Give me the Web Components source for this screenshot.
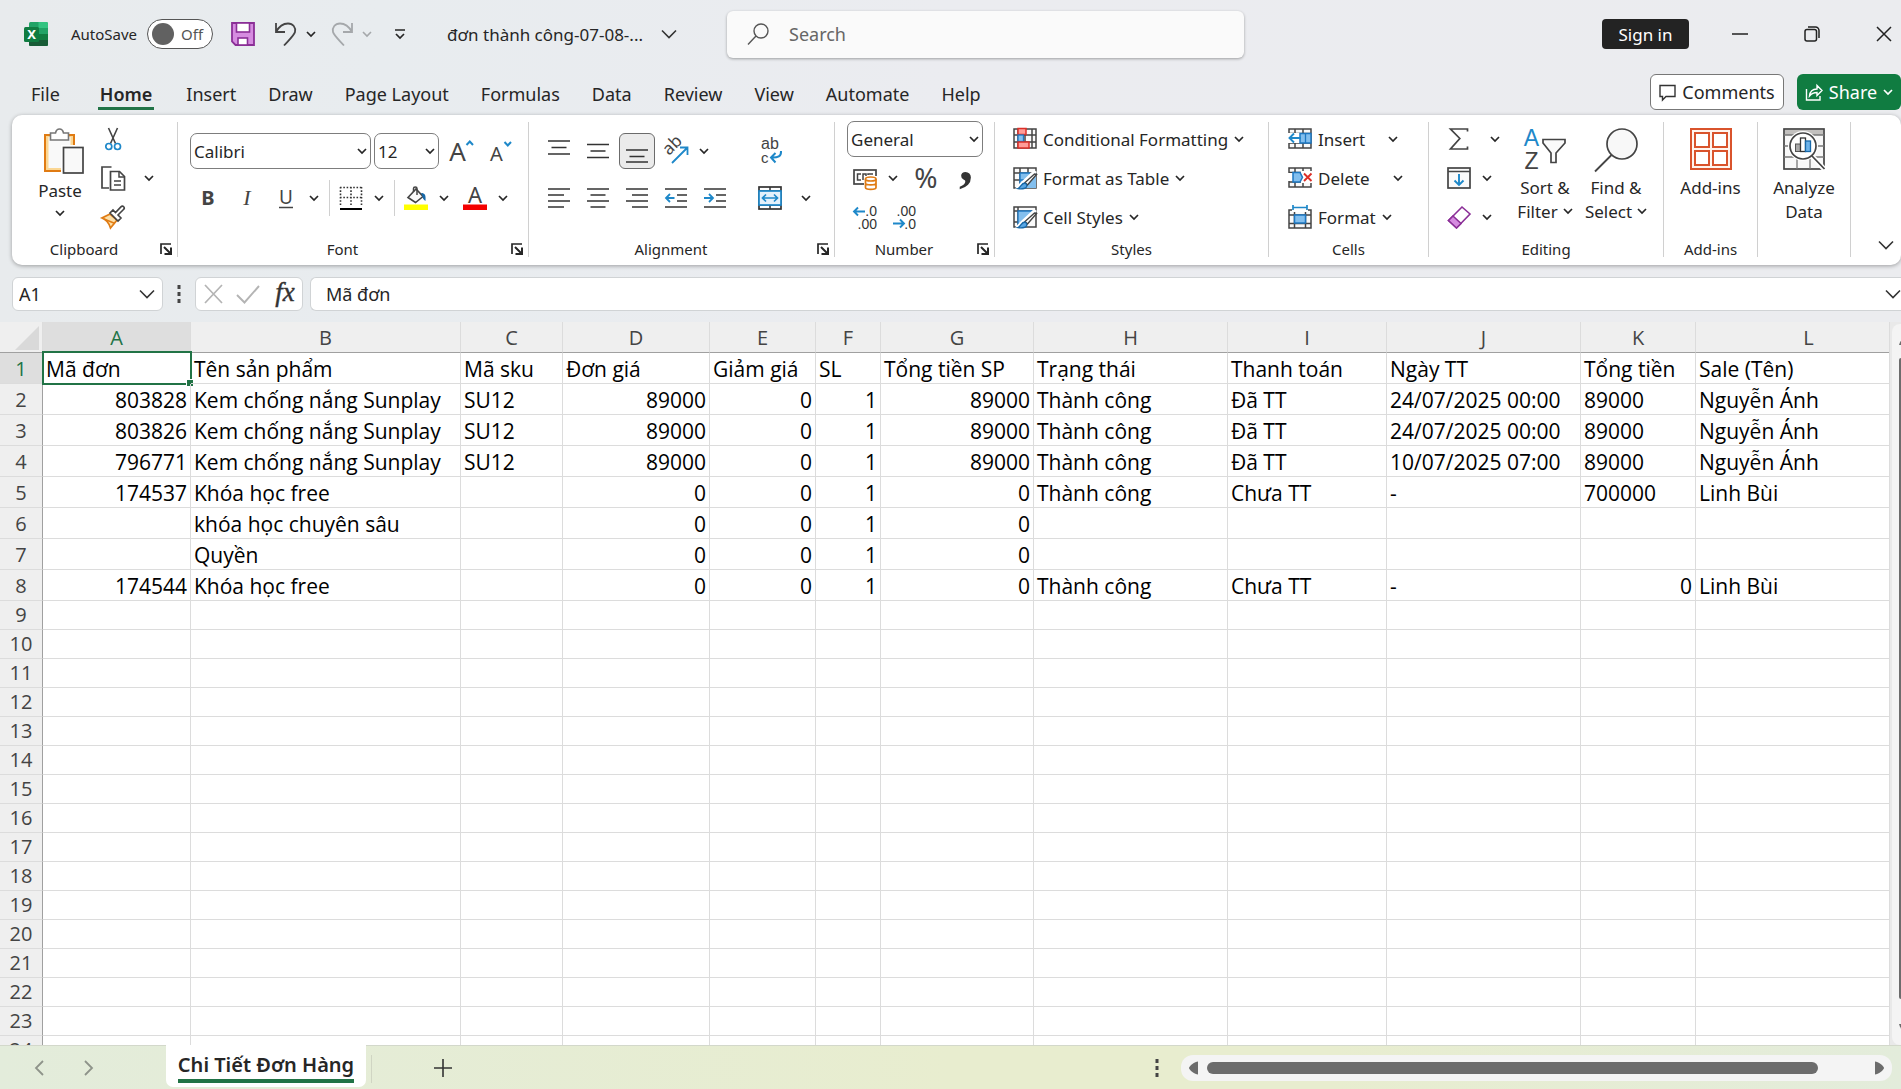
<!DOCTYPE html>
<html lang="vi">
<head>
<meta charset="utf-8">
<title>đơn thành công-07-08 - Excel</title>
<style>
html,body{margin:0;height:100%;overflow:hidden}
body{font-family:"Noto Sans","Open Sans",sans-serif;color:#262626;font-size:17px}
</style>
</head>
<body>
<excel-app></excel-app>
<script>
const ICONS = {
  chev: [10,10,'<path d="M1 3l4 4 4-4" fill="none" stroke="#262626" stroke-width="1.7"/>'],
  chevGrey: [10,10,'<path d="M1 3l4 4 4-4" fill="none" stroke="#a5a8ab" stroke-width="1.6"/>'],
  chevWhite: [10,10,'<path d="M1 3l4 4 4-4" fill="none" stroke="#fff" stroke-width="1.7"/>'],
  chevBig: [16,16,'<path d="M1 4.500l7 7 7-7" fill="none" stroke="#333" stroke-width="1.6"/>'],
  chevLeft: [16,16,'<path d="M11 1L4 8l7 7" fill="none" stroke="#8e938a" stroke-width="1.8"/>'],
  chevRight: [16,16,'<path d="M5 1l7 7-7 7" fill="none" stroke="#8e938a" stroke-width="1.8"/>'],
  excel: [24,24,'<rect x="5" width="19" height="24" rx="1.500" fill="#21a366"/><path d="M14.500 0H22.500a1.500 1.500 0 0 1 1.500 1.500V6h-9.500z" fill="#33c481"/><path d="M5 6h9.500v6H5z" fill="#107c41"/><path d="M14.500 12H24v6h-9.500z" fill="#107c41"/><path d="M5 12h9.500v6H5z" fill="#185c37"/><path d="M5 18h19v4.500a1.500 1.500 0 0 1-1.500 1.500h-16A1.500 1.500 0 0 1 5 22.500z" fill="#185c37"/><rect y="5" width="15" height="15" rx="1.500" fill="#107c41"/><text x="7.500" y="17" font-size="13" font-weight="700" text-anchor="middle" fill="#fff">X</text>'],
  save: [24,24,'<path d="M1 1h22v22H4.500L1 19.500z" fill="#d68ce0" stroke="#8b2f97" stroke-width="1.800"/><rect x="5.500" y="1" width="13" height="9" fill="#fff" stroke="#8b2f97" stroke-width="1.600"/><rect x="7" y="16" width="9.500" height="7" fill="#fff" stroke="#8b2f97" stroke-width="1.600"/>'],
  undo: [24,24,'<path d="M2 1v9h9M2 10C5 4.500 9 1.500 14 1.500c5 0 8 4 7 8.500-.6 3-6 8-11 13.500" fill="none" stroke="#444" stroke-width="1.800"/>'],
  redo: [24,24,'<path d="M22 1v9h-9M22 10C19 4.500 15 1.500 10 1.500c-5 0-8 4-7 8.500.6 3 6 8 11 13.500" fill="none" stroke="#a5a8ab" stroke-width="1.800"/>'],
  qat: [12,12,'<path d="M1 2h10M2 6l4 4 4-4" fill="none" stroke="#262626" stroke-width="1.700"/>'],
  search: [22,22,'<circle cx="14" cy="8" r="7" fill="none" stroke="#555" stroke-width="1.400"/><path d="M9 13L1 21.500" stroke="#555" stroke-width="1.400"/>'],
  min: [16,16,'<path d="M0 8h16" stroke="#222" stroke-width="1.500"/>'],
  restore: [16,16,'<rect x="1" y="3.500" width="11.500" height="11.500" rx="2" fill="none" stroke="#222" stroke-width="1.500"/><path d="M4 1h7.500A3.500 3.500 0 0 1 15 4.500V12" fill="none" stroke="#222" stroke-width="1.500"/>'],
  close: [16,16,'<path d="M1 1l14 14M15 1L1 15" stroke="#222" stroke-width="1.500"/>'],
  comment: [17,17,'<path d="M1 1.500h15v11H7l-3.500 3.500v-3.500H1z" fill="none" stroke="#333" stroke-width="1.400"/>'],
  share: [18,18,'<path d="M1.500 6v11h13.500v-4M4.500 13c.5-4.500 3-7 7.500-7V2.500l5 5-5 5V9.500c-3.500 0-5.500 1-7.500 3.500z" fill="none" stroke="#fff" stroke-width="1.400"/>'],
  paste: [42,46,'<path d="M3 7h29v36H3z" fill="#fbd794" stroke="#e07b13" stroke-width="2"/><path d="M6.500 9h22v31h-22z" fill="#f9f9f9"/><path d="M8.500 12V5h5c.5-2.500 2-4 4-4s3.500 1.500 4 4h5v7z" fill="#fff" stroke="#777" stroke-width="1.600"/><rect x="19" y="17" width="23" height="29" fill="#fff"/><rect x="21.500" y="19.500" width="19.500" height="25.500" fill="#f9f9f9" stroke="#444" stroke-width="1.700"/>'],
  cut: [24,24,'<path d="M7.500 1l7 15.500M16.500 1l-7 15.500" stroke="#444" stroke-width="1.600"/><circle cx="7.800" cy="19.500" r="3" fill="none" stroke="#1e88c9" stroke-width="1.700"/><circle cx="16.500" cy="19.500" r="3" fill="none" stroke="#1e88c9" stroke-width="1.700"/>'],
  copy: [24,24,'<path d="M8 22H1V1h9.500" fill="none" stroke="#444" stroke-width="1.700"/><path d="M9.500 5.500h9l5 5V24h-14z" fill="#fff" stroke="#444" stroke-width="1.700"/><path d="M18 5.500V11h5.500M13 15h7M13 19h7" fill="none" stroke="#444" stroke-width="1.500"/>'],
  brush: [24,24,'<path d="M9 9L1 13c4 1.500 7 5 8.500 10L16 15z" fill="#fde0a8" stroke="#e07b13" stroke-width="1.700"/><path d="M3 14l11 4.500" stroke="#e07b13" stroke-width="1.400"/><path d="M9 8l8 8 3-3-3-3 5.500-5.500c1-1 1-2 .2-2.800-.8-.8-1.800-.8-2.800.2L14.500 7.500 12 5z" fill="#fff" stroke="#444" stroke-width="1.600"/>'],
  launch: [12,12,'<path d="M1 11V1h10" fill="none" stroke="#262626" stroke-width="1.700"/><path d="M4 4l6 6M11 4.500V11H4.500" fill="none" stroke="#262626" stroke-width="2"/>'],
  bigA: [24,24,'<text x="9.500" y="22" font-size="26" text-anchor="middle" fill="#444">A</text><path d="M18.500 6l3.300-3.500L25 6" fill="none" stroke="#1e88c9" stroke-width="2"/>'],
  smallA: [24,24,'<text x="9.500" y="22" font-size="20" text-anchor="middle" fill="#444">A</text><path d="M17.500 3l3.300 3.500L24 3" fill="none" stroke="#1e88c9" stroke-width="2"/>'],
  bold: [24,24,'<text x="12" y="19" font-size="20" font-weight="700" text-anchor="middle" fill="#444">B</text>'],
  italic: [24,24,'<text x="12" y="19" font-size="22" font-style="italic" font-family="Liberation Serif" text-anchor="middle" fill="#444">I</text>'],
  underline: [24,24,'<text x="12" y="18" font-size="19" text-anchor="middle" fill="#444">U</text><path d="M5 21.500h14" stroke="#444" stroke-width="1.500"/>'],
  borders: [24,24,'<path d="M1.500 1v19M22.500 1v19M12 1v19M1 1.500h22M1 11.500h22" stroke="#333" stroke-width="1.600" stroke-dasharray="1.600 1.700"/><path d="M1 23h22" stroke="#000" stroke-width="2"/>'],
  fill: [24,24,'<path d="M4 11.500L12 3l7 7.500-7.500 6z" fill="#fafafa" stroke="#444" stroke-width="1.600"/><path d="M9.500 6V2.500c0-2 3.500-2 3.500 0V9" fill="none" stroke="#444" stroke-width="1.500"/><path d="M17 7c4 0 5 2 4.500 8-2-1-3-3-3.500-6" fill="#1768a8"/><path d="M0 18.500h24V24H0z" fill="#ff0"/>'],
  fontcolor: [24,24,'<text x="12" y="16.500" font-size="22" text-anchor="middle" fill="#444">A</text><path d="M0 18.500h24V24H0z" fill="#f40000"/>'],
  top: [24,24,'<path d="M1 2h22M4.500 8.500h15M1 15h22" stroke="#333" stroke-width="1.700"/>'],
  middle: [24,24,'<path d="M1 5.500h22M4.500 12h15M1 18.500h22" stroke="#333" stroke-width="1.700"/>'],
  bottom: [24,24,'<path d="M1 11h22M4.500 17.500h15M1 23h22" stroke="#333" stroke-width="1.700"/>'],
  orient: [26,26,'<text x="0" y="0" font-size="17" fill="#444" transform="translate(6 18) rotate(-45)">ab</text><path d="M9 25L24 10M17 9.500h7.500V17" fill="none" stroke="#1e88c9" stroke-width="1.800"/>'],
  left: [24,24,'<path d="M1 3h22M1 9h16M1 15h22M1 21h16" stroke="#333" stroke-width="1.700"/>'],
  center: [24,24,'<path d="M1 3h22M4.500 9h15M1 15h22M4.500 21h15" stroke="#333" stroke-width="1.700"/>'],
  right: [24,24,'<path d="M1 3h22M7 9h16M1 15h22M7 21h16" stroke="#333" stroke-width="1.700"/>'],
  outdent: [24,24,'<path d="M1 3h22M13 9h10M13 15h10M1 21h22" stroke="#333" stroke-width="1.700"/><path d="M10.500 12H2M6 8l-4 4 4 4" fill="none" stroke="#1e88c9" stroke-width="1.800"/>'],
  indent: [24,24,'<path d="M1 3h22M13 9h10M13 15h10M1 21h22" stroke="#333" stroke-width="1.700"/><path d="M1 12h8.500M6 8l4 4-4 4" fill="none" stroke="#1e88c9" stroke-width="1.800"/>'],
  wrap: [24,24,'<text x="3" y="10" font-size="16" font-family="Liberation Sans" fill="#444">ab</text><text x="3" y="24" font-size="15" font-family="Liberation Sans" fill="#444">c</text><path d="M23 12c.5 5-3 7-10 6.500M17.500 14L13 18.500l4.500 5" fill="none" stroke="#1e88c9" stroke-width="2"/>'],
  merge: [24,24,'<rect x="1" y="1" width="22" height="22" fill="#fff" stroke="#333" stroke-width="1.700"/><path d="M12 1v22M1 5h22M1 19h22" stroke="#333" stroke-width="1.500"/><rect x="1" y="5" width="22" height="14" fill="#e4f1fb" stroke="#1e88c9" stroke-width="1.700"/><path d="M4.500 12h15M8 8.500L4.500 12 8 15.500M16 8.500l3.500 3.500-3.500 3.500" fill="none" stroke="#1e88c9" stroke-width="1.700"/>'],
  currency: [24,24,'<rect x="1" y="4" width="22" height="14" fill="#fff" stroke="#444" stroke-width="1.700"/><path d="M8 8H4.500v6H8M10 14V8h3v3M15 9V8h5" fill="none" stroke="#444" stroke-width="1.500"/><path d="M11 10h13v14H11z" fill="#fff"/><path d="M12.500 13v8.500c0 2.500 10.500 2.500 10.500 0V13M12.500 17c0 2.500 10.500 2.500 10.500 0" fill="none" stroke="#e07b13" stroke-width="1.700"/><ellipse cx="17.750" cy="13" rx="5.250" ry="2" fill="#fff" stroke="#e07b13" stroke-width="1.700"/>'],
  percent: [26,26,'<text x="15" y="23" font-size="28" text-anchor="middle" fill="#444">%</text>'],
  comma: [24,24,'<text x="15" y="14" font-size="56" font-weight="700" font-family="Liberation Serif" text-anchor="middle" fill="#333">,</text>'],
  incdec: [24,24,'<text x="24" y="11" font-size="14" font-family="Liberation Sans" text-anchor="end" fill="#333">.0</text><text x="24" y="24" font-size="14" font-family="Liberation Sans" text-anchor="end" fill="#333">.00</text><path d="M12 6.500H1M5 2.500l-4 4 4 4" fill="none" stroke="#1e88c9" stroke-width="1.900"/>'],
  decdec: [24,24,'<text x="24" y="11" font-size="14" font-family="Liberation Sans" text-anchor="end" fill="#333">.00</text><text x="24" y="24" font-size="14" font-family="Liberation Sans" text-anchor="end" fill="#333">.0</text><path d="M1 18.500h11M8 14.500l4 4-4 4" fill="none" stroke="#1e88c9" stroke-width="1.900"/>'],
  cond: [24,24,'<path d="M1 2h22v19H1zM1 8h22M1 15h22M5 2v19M19 2v19M12 2v19" fill="#fafafa" stroke="#444" stroke-width="1.500"/><rect x="5" y="1.500" width="8" height="6" fill="#ff9c97" stroke="#dc2f28" stroke-width="1.500"/><rect x="5" y="8" width="5.500" height="6.500" fill="#83bfee" stroke="#1e78c2" stroke-width="1.300"/><rect x="5" y="15" width="11" height="6" fill="#ff9c97" stroke="#dc2f28" stroke-width="1.500"/>'],
  fmtTable: [24,24,'<path d="M1 2h22v20H1zM1 7h22M1 14h10M7 2v20M15 2v8" fill="#fafafa" stroke="#444" stroke-width="1.500"/><path d="M7 7h16v15H7z" fill="#83bfee"/><path d="M7 7h10M7 7v15M7 14h6" stroke="#1e78c2" stroke-width="1.400"/><path d="M24 6L12 18l-4 5-6-.5L7 17l14-13z" fill="#fff"/><path d="M23.500 8.500L14.500 19 12 16.500l9.500-8.500z" fill="#fff" stroke="#444" stroke-width="1.400"/><path d="M12 17c3 2 2 5-1 5.500-2 .4-4 .4-6 0 3-1 3-5.500 7-5.500z" fill="#5aa7e4" stroke="#1768a8" stroke-width="1.300"/>'],
  cellStyles: [24,24,'<path d="M1 2h22v20H1zM1 6h22M5 2v20M1 17h6" fill="#fafafa" stroke="#444" stroke-width="1.500"/><path d="M5 6h17v3L10 19H5z" fill="#83bfee" stroke="#1e78c2" stroke-width="1.300"/><path d="M24 6L12 18l-4 5-6-.5L7 17l14-13z" fill="#fff"/><path d="M23.500 8.500L14.500 19 12 16.500l9.500-8.500z" fill="#fff" stroke="#444" stroke-width="1.400"/><path d="M12 17c3 2 2 5-1 5.500-2 .4-4 .4-6 0 3-1 3-5.500 7-5.500z" fill="#5aa7e4" stroke="#1768a8" stroke-width="1.300"/>'],
  insCell: [24,24,'<path d="M1 2h22v19H1zM1 6.500h22M1 16h22M7 2v19M15 2v19" fill="#fafafa" stroke="#444" stroke-width="1.500"/><path d="M0 6h14v10H0z" fill="#fff"/><rect x="12" y="6.500" width="11" height="9.500" fill="#83bfee" stroke="#1e78c2" stroke-width="1.500"/><path d="M17.500 6.500V16" stroke="#1e78c2" stroke-width="1.300"/><path d="M13 11H1.500M6 6.500L1.500 11 6 15.500" fill="none" stroke="#1e88c9" stroke-width="1.900"/>'],
  delCell: [24,24,'<path d="M1 2h22v19H1zM1 6.500h22M1 16h22M7 2v19M15 2v19" fill="#fafafa" stroke="#444" stroke-width="1.500"/><path d="M0 7h5v8H0zM13 5h11v12H13z" fill="#fff"/><path d="M5 6.500h7l2.500 4.800L12 16H5z" fill="#83bfee" stroke="#1e78c2" stroke-width="1.500"/><path d="M16 7.500l7.500 7.500M23.500 7.500L16 15" stroke="#dc2f28" stroke-width="1.900"/>'],
  fmtCell: [24,24,'<path d="M1 5h22v18H1zM1 10h22M1 18.500h22M6.500 5v18M17.500 5v18" fill="#fafafa" stroke="#444" stroke-width="1.500"/><path d="M4 0h16v7H4z" fill="#fff"/><rect x="6.500" y="10" width="11" height="8" fill="#83bfee" stroke="#1e78c2" stroke-width="1.500"/><path d="M5 2.500h14M5 0v5M19 0v5" stroke="#1e88c9" stroke-width="1.700"/>'],
  sum: [24,24,'<path d="M20.500 4.500V2H3.500l9.300 9.500L3.500 22h17v-2.500" fill="none" stroke="#444" stroke-width="1.700"/>'],
  filldown: [24,24,'<rect x="1" y="2" width="22" height="20" fill="#fafafa" stroke="#444" stroke-width="1.700"/><path d="M1 5.500h22" stroke="#444" stroke-width="1.500"/><path d="M12 8v11M7.500 14.500L12 19l4.500-4.500" fill="none" stroke="#1e88c9" stroke-width="1.900"/>'],
  eraser: [24,24,'<path d="M1.500 15.500L15 2l8 7L9.500 23z" fill="#fff" stroke="#8b2f97" stroke-width="1.600"/><path d="M1.500 15.500L6 11l8 7.500L9.500 23z" fill="#d68ce0" stroke="#8b2f97" stroke-width="1.600"/>'],
  sort: [42,42,'<text x="7.500" y="18" font-size="23" font-family="Liberation Sans" text-anchor="middle" fill="#1e88c9">A</text><text x="7.500" y="41" font-size="23" font-family="Liberation Sans" text-anchor="middle" fill="#444">Z</text><path d="M19 11.500h22v3.500l-9 10v9.500h-5V25l-8-10z" fill="#fafafa" stroke="#444" stroke-width="1.700"/>'],
  find: [44,44,'<circle cx="28" cy="16" r="15" fill="#f8f8f8" stroke="#444" stroke-width="1.700"/><path d="M17.500 27L1 43.500" stroke="#444" stroke-width="1.800"/>'],
  addins: [42,42,'<rect x="1" y="1" width="40" height="40" fill="#fff4ee" stroke="#d9532c" stroke-width="2"/><g fill="#fff" stroke="#d9532c" stroke-width="2"><rect x="5" y="5" width="14" height="14"/><rect x="23" y="5" width="14" height="14"/><rect x="5" y="23" width="14" height="14"/><rect x="23" y="23" width="14" height="14"/></g>'],
  analyze: [42,42,'<rect x="1" y="1" width="40" height="40" fill="#f8f8f8" stroke="#444" stroke-width="1.700"/><path d="M2 2h38v5H2z" fill="#c2c0be"/><path d="M1 7h40M1 18h40M1 29h40M14 29v12M27 29v12" stroke="#777" stroke-width="1.300"/><circle cx="20" cy="18" r="15" fill="#fff"/><path d="M28 27l14 15" stroke="#fff" stroke-width="5"/><circle cx="20" cy="18" r="13" fill="#fff" stroke="#444" stroke-width="1.700"/><path d="M29 28l12.500 13" stroke="#444" stroke-width="1.800"/><rect x="12.500" y="16" width="5" height="7.500" fill="#aaa" stroke="#555"/><rect x="17.500" y="10" width="5" height="13.500" fill="#fff" stroke="#333" stroke-width="1.300"/><rect x="22.500" y="13" width="5" height="10.500" fill="#6db3ea" stroke="#1768a8" stroke-width="1.300"/>'],
  dots: [4,18,'<path d="M.500 0h3v4h-3zM.500 7h3v4h-3zM.500 14h3v4h-3z" fill="#444"/>'],
  cancel: [20,20,'<path d="M1 1l17 18M18 1L1 19" stroke="#b4b4b4" stroke-width="1.700"/>'],
  accept: [24,20,'<path d="M1 11l7.500 7.500L23 2" fill="none" stroke="#b4b4b4" stroke-width="1.900"/>'],
  fx: [24,26,'<text x="13" y="20" font-size="27" font-style="italic" font-family="Liberation Serif" text-anchor="middle" fill="#333" stroke="#333" stroke-width=".4">fx</text>'],
  plus: [18,18,'<path d="M9 0v18M0 9h18" stroke="#333" stroke-width="1.600"/>'],
  corner: [24,24,'<path d="M24 0v24H0z" fill="#d9d9d9"/>'],
  arrL: [12,14,'<path d="M10 0.500v13C7 13.500 1 9 1 7s6-6.500 9-6.500z" fill="#6c6c6c"/>'],
  arrR: [12,14,'<path d="M2 0.500v13c3 0 9-4.500 9-6.500S5 .5 2 .5z" fill="#6c6c6c"/>'],
  arrU: [14,10,'<path d="M0 9h14C13 5 9 0 7 0S1 5 0 9z" fill="#6c6c6c"/>'],
  arrD: [14,10,'<path d="M0 1h14c-1 4-5 9-7 9S1 5 0 1z" fill="#6c6c6c"/>']
};
const BASE = '*{box-sizing:border-box}button,input,select{font:inherit;color:inherit;border:0;background:none;padding:0;margin:0;outline:0}button{display:flex;align-items:center;justify-content:center;white-space:nowrap}';
function define(name, css, html) {
  customElements.define(name, class extends HTMLElement {
    connectedCallback() {
      if (this.shadowRoot) return;
      this.attachShadow({mode:'open'}).innerHTML = '<style>' + BASE + css + '</style>' + (typeof html === 'function' ? html(this) : html);
    }
  });
}

define('ui-icon', ':host{display:inline-flex;flex:none}svg{display:block;overflow:visible}', el => {
  const [w,h,body] = ICONS[el.getAttribute('name')];
  return `<svg width="${w}" height="${h}" viewBox="0 0 ${w} ${h}" aria-hidden="true">${body}</svg>`;
});

define('tool-button', `:host{display:flex;flex:none;height:36px}
  .main{width:36px;height:36px;border:1px solid transparent;border-radius:6px}
  :host([pressed]) .main{background:#ebebeb;border-color:#6b6b6b}
  .more{width:20px;height:36px}:host([wide]) .more{width:36px}`, el =>
  `<button class="main" aria-label="${el.getAttribute('label')}"><ui-icon name="${el.getAttribute('icon')}"></ui-icon></button>` +
  (el.hasAttribute('more') ? `<button class="more" aria-label="${el.getAttribute('label')} options"><ui-icon name="chev"></ui-icon></button>` : ''));

define('text-button', `:host{display:flex;height:36px;font-size:17px}
  button{height:36px;gap:6px;padding:0 6px}.more{padding:0;width:20px;margin-left:12px}`, el =>
  `<button><ui-icon name="${el.getAttribute('icon')}"></ui-icon><slot></slot>${el.hasAttribute('split') ? '' : '<ui-icon name="chev"></ui-icon>'}</button>` +
  (el.hasAttribute('split') ? `<button class="more" aria-label="More"><ui-icon name="chev"></ui-icon></button>` : ''));

define('large-button', `:host{display:block;flex:none;font-size:17px;line-height:24px}
  button{flex-direction:column;justify-content:flex-start;width:100%;gap:6px;padding-top:6px}
  .ic{height:42px}p{margin:0;text-align:center}p ui-icon{margin-left:5px;vertical-align:2px}`, el =>
  `<button><span class="ic"><ui-icon name="${el.getAttribute('icon')}"></ui-icon></span><p><slot></slot>${el.hasAttribute('more') ? '<ui-icon name="chev"></ui-icon>' : ''}</p></button>`);

define('drop-down', `:host{display:block;position:relative;flex:none;height:36px;font-size:17px}
  select{appearance:none;width:100%;height:36px;border:1px solid #7d7d7d;border-radius:7px;padding:0 22px 0 3px;background:#fff}
  ui-icon{position:absolute;right:4px;top:13px;pointer-events:none}`, el =>
  `<select aria-label="${el.getAttribute('label')}"><option>${el.getAttribute('value')}</option></select><ui-icon name="chev"></ui-icon>`);

define('ribbon-group', `:host{display:flex;flex-direction:column;flex:none;border-right:1px solid #d0d0d0;height:135px}
  .body{display:flex;flex:none;height:117px;padding:0 12px}
  .foot{display:flex;flex:none;align-items:center;height:20px;font-size:15px;line-height:20px}
  .foot span{flex:1;text-align:center}.foot button{width:12px;margin:0 5px 0 4px}`, el =>
  `<div class="body"><slot></slot></div><div class="foot"><span>${el.getAttribute('label')||''}</span>${el.hasAttribute('launch')?'<button aria-label="Dialog launcher"><ui-icon name="launch"></ui-icon></button>':''}</div>`);

define('title-bar', `:host{display:flex;align-items:center;height:56px;padding:0 9px 0 24px;font-size:15px}
  .left{display:flex;align-items:center;width:703px;flex:none}
  label{display:flex;align-items:center;gap:10px;margin-left:23px}
  .tg{position:relative;width:66px;height:30px;border:1px solid #555;border-radius:15px;background:#fff;display:flex;align-items:center;justify-content:flex-end;padding-right:9px;color:#555}
  input[type=checkbox]{appearance:none;position:absolute;left:4px;top:3px;width:22px;height:22px;border-radius:11px;background:#616161}
  .s{margin-left:18px}.u{margin-left:19px}.c{margin-left:8px}.r{margin-left:14px}.q{margin-left:22px}
  .name{margin-left:auto;margin-right:50px;gap:18px;font-size:17px}
  .search{display:flex;align-items:center;gap:20px;flex:0 1 517px;height:47px;background:#fafafa;border-radius:6px;box-shadow:0 1px 3px #0005;padding:0 20px;font-size:18px}
  .search input{flex:1;color:#555}.search input::placeholder{color:#666;opacity:1}
  .win{display:flex;align-items:center;margin-left:auto;gap:56px}
  .sign{background:#232323;color:#fff;border-radius:4px;width:87px;height:30px;font-size:17px;margin-right:-13px}`,
  `<div class="left"><ui-icon name="excel"></ui-icon><label>AutoSave<span class="tg"><input type="checkbox">Off</span></label>
  <button class="s" aria-label="Save"><ui-icon name="save"></ui-icon></button>
  <button class="u" aria-label="Undo"><ui-icon name="undo"></ui-icon></button><button class="c" aria-label="Undo list"><ui-icon name="chev"></ui-icon></button>
  <button class="r" aria-label="Redo"><ui-icon name="redo"></ui-icon></button><button class="c" aria-label="Redo list"><ui-icon name="chevGrey"></ui-icon></button>
  <button class="q" aria-label="Customize toolbar"><ui-icon name="qat"></ui-icon></button>
  <button class="name">đơn thành công-07-08-...<ui-icon name="chevBig"></ui-icon></button></div>
  <div class="search"><ui-icon name="search"></ui-icon><input aria-label="Search" placeholder="Search"></div>
  <div class="win"><button class="sign">Sign in</button><button aria-label="Minimize"><ui-icon name="min"></ui-icon></button><button aria-label="Restore"><ui-icon name="restore"></ui-icon></button><button aria-label="Close"><ui-icon name="close"></ui-icon></button></div>`);

define('ribbon-tab', `:host{display:block}button{flex-direction:column;height:36px;font-size:18px;line-height:24px;border-bottom:3px solid transparent;padding-top:7px}
  :host([active]) button{font-weight:600;border-bottom-color:#217346;padding:7px 2px 0}`, '<button><slot></slot></button>');

define('ribbon-tabs', `:host{display:flex;align-items:center;height:41px;margin-top:12px;padding:0 0 5px 31px;font-size:18px}
  nav{display:flex;gap:32px}nav :nth-child(2){margin-left:6px}
  .r{display:flex;margin-left:auto;gap:13px}.r button{height:36px;gap:6px;border-radius:6px}
  .cm{width:134px;background:#fff;border:1px solid #777}.sh{width:104px;background:#107c41;color:#fff}`,
  `<nav>${['File','Home','Insert','Draw','Page Layout','Formulas','Data','Review','View','Automate','Help'].map(t=>`<ribbon-tab${t==='Home'?' active':''}>${t}</ribbon-tab>`).join('')}</nav>
  <div class="r"><button class="cm"><ui-icon name="comment"></ui-icon>Comments</button><button class="sh"><ui-icon name="share"></ui-icon>Share<ui-icon name="chevWhite"></ui-icon></button></div>`);

define('ribbon-bar', `:host{display:flex;height:150px;margin-left:12px;background:#fff;border-radius:10px;box-shadow:0 1px 4px #0005;padding-top:7px}
  .col{display:flex;flex-direction:column;gap:3px;margin-top:-1px}
  .two{display:flex;flex-direction:column;gap:11px;margin-top:11px}
  .row{display:flex;gap:3px}
  .v{width:1px;background:#d0d0d0;margin-left:2px}.tall{margin:8px 10px 14px 9px}
  .paste{width:72px;flex:none;flex-direction:column;justify-content:flex-start;gap:5px;padding-top:6px;font-size:17px;line-height:24px}
  .paste ui-icon:first-child{margin-left:6px}
  .clip{width:166px}.font{width:351px}.align{width:306px}.num{width:160px}.sty{width:274px}.cells{width:160px}.edit{width:235px}.add{width:94px}.an{width:93px}
  .num drop-down{width:136px}.edit .col{margin-right:-5px}
  .clip .col{margin-left:-1px}
  .cells .col{margin-left:1px}
  .an large-button,.add large-button{margin:0 -12px;flex:1}
  .sortb{width:74px}.findb{width:74px;margin-left:-3px}
  .collapse{margin-left:auto;align-self:flex-end;margin-bottom:12px;width:30px}`,
  `<ribbon-group class="clip" label="Clipboard" launch><button class="paste"><ui-icon name="paste"></ui-icon>Paste<ui-icon name="chev"></ui-icon></button>
    <div class="col"><tool-button icon="cut" label="Cut"></tool-button><tool-button icon="copy" label="Copy" more wide></tool-button><tool-button icon="brush" label="Format Painter"></tool-button></div></ribbon-group>
  <ribbon-group class="font" label="Font" launch><div class="two"><div class="row"><drop-down style="width:181px" label="Font" value="Calibri"></drop-down><drop-down style="width:65px" label="Font size" value="12"></drop-down><tool-button icon="bigA" label="Increase font size"></tool-button><tool-button icon="smallA" label="Decrease font size"></tool-button></div>
    <div class="row"><tool-button icon="bold" label="Bold"></tool-button><tool-button icon="italic" label="Italic"></tool-button><tool-button icon="underline" label="Underline" more></tool-button><span class="v"></span><tool-button icon="borders" label="Borders" more></tool-button><span class="v"></span><tool-button icon="fill" label="Fill color" more></tool-button><tool-button icon="fontcolor" label="Font color" more></tool-button></div></div></ribbon-group>
  <ribbon-group class="align" label="Alignment" launch><div class="two"><div class="row"><tool-button icon="top" label="Top"></tool-button><tool-button icon="middle" label="Middle"></tool-button><tool-button pressed icon="bottom" label="Bottom"></tool-button><tool-button icon="orient" label="Orientation" more></tool-button></div>
    <div class="row"><tool-button icon="left" label="Left"></tool-button><tool-button icon="center" label="Center"></tool-button><tool-button icon="right" label="Right"></tool-button><tool-button icon="outdent" label="Decrease indent"></tool-button><tool-button icon="indent" label="Increase indent"></tool-button></div></div>
    <span class="v tall"></span><div class="two"><tool-button icon="wrap" label="Wrap text"></tool-button><tool-button icon="merge" label="Merge" more wide></tool-button></div></ribbon-group>
  <ribbon-group class="num" label="Number" launch><div class="col"><drop-down label="Number format" value="General"></drop-down><div class="row"><tool-button icon="currency" label="Accounting" more></tool-button><tool-button icon="percent" label="Percent"></tool-button><tool-button icon="comma" label="Comma style"></tool-button></div><div class="row"><tool-button icon="incdec" label="Increase decimal"></tool-button><tool-button icon="decdec" label="Decrease decimal"></tool-button></div></div></ribbon-group>
  <ribbon-group class="sty" label="Styles"><div class="col"><text-button icon="cond">Conditional Formatting</text-button><text-button icon="fmtTable">Format as Table</text-button><text-button icon="cellStyles">Cell Styles</text-button></div></ribbon-group>
  <ribbon-group class="cells" label="Cells"><div class="col"><text-button icon="insCell" split>Insert</text-button><text-button icon="delCell" split>Delete</text-button><text-button icon="fmtCell">Format</text-button></div></ribbon-group>
  <ribbon-group class="edit" label="Editing"><div class="col"><tool-button icon="sum" label="Sum" more wide></tool-button><tool-button icon="filldown" label="Fill" more></tool-button><tool-button icon="eraser" label="Clear" more></tool-button></div>
    <large-button class="sortb" icon="sort" more>Sort &amp;<br>Filter</large-button><large-button class="findb" icon="find" more>Find &amp;<br>Select</large-button></ribbon-group>
  <ribbon-group class="add" label="Add-ins"><large-button icon="addins">Add-ins</large-button></ribbon-group>
  <ribbon-group class="an"><large-button icon="analyze">Analyze<br>Data</large-button></ribbon-group>
  <button class="collapse" aria-label="Collapse ribbon"><ui-icon name="chevBig"></ui-icon></button>`);

define('formula-bar', `:host{display:flex;align-items:center;height:57px;font-size:18px;padding-left:12px}
  div{display:flex;align-items:center;height:34px;background:#fff;border:1px solid #d0d3d5;border-radius:6px}
  .nb{width:151px;padding:0 7px 0 6px}.nb input{flex:1;min-width:0}
  .d{margin:0 14px}.ed{width:108px;gap:12px;padding-left:8px;margin-right:7px}
  .fb{flex:1;border-right:0;border-radius:6px 0 0 6px;padding-left:15px}.fb input{flex:1}`,
  `<div class="nb"><input aria-label="Name box" value="A1"><button aria-label="Names"><ui-icon name="chevBig"></ui-icon></button></div><ui-icon class="d" name="dots"></ui-icon>
  <div class="ed"><button aria-label="Cancel"><ui-icon name="cancel"></ui-icon></button><button aria-label="Enter"><ui-icon name="accept"></ui-icon></button><button aria-label="Insert function"><ui-icon name="fx"></ui-icon></button></div>
  <div class="fb"><input aria-label="Formula" value="Mã đơn"><button aria-label="Expand"><ui-icon name="chevBig"></ui-icon></button></div>`);

const COLS = [['A',148],['B',270],['C',102],['D',147],['E',106],['F',65],['G',153],['H',194],['I',159],['J',194],['K',115],['L',226]];
const K = 'Kem chống nắng Sunplay', TC = 'Thành công', NA = 'Nguyễn Ánh';
const DATA = [
  ['Mã đơn','Tên sản phẩm','Mã sku','Đơn giá','Giảm giá','SL','Tổng tiền SP','Trạng thái','Thanh toán','Ngày TT','Tổng tiền','Sale (Tên)'],
  [803828,K,'SU12',89000,0,1,89000,TC,'Đã TT','24/07/2025 00:00','89000',NA],
  [803826,K,'SU12',89000,0,1,89000,TC,'Đã TT','24/07/2025 00:00','89000',NA],
  [796771,K,'SU12',89000,0,1,89000,TC,'Đã TT','10/07/2025 07:00','89000',NA],
  [174537,'Khóa học free','',0,0,1,0,TC,'Chưa TT','-','700000','Linh Bùi'],
  ['','khóa học chuyên sâu','',0,0,1,0,'','','','',''],
  ['','Quyền','',0,0,1,0,'','','','',''],
  [174544,'Khóa học free','',0,0,1,0,TC,'Chưa TT','-',0,'Linh Bùi']
];
define('sheet-grid', `:host{display:flex;flex:1;min-height:0;background:#e9e9e9}
  .view{flex:1;min-width:0;overflow:hidden;background:#fff;border-right:1px solid #dcdcdc}
  table{border-collapse:separate;border-spacing:0;table-layout:fixed;width:1922px;font:21px/28px "Open Sans","Noto Sans",sans-serif;color:#000}
  th{font:400 20px/28px "Open Sans","Noto Sans",sans-serif;color:#444;background:#efefef;padding:2px 0 0;border-right:1px solid #dcdcdc;border-bottom:1px solid #dcdcdc}
  thead th{height:31px;border-bottom-color:#a0a0a0}tbody th{border-right-color:#a0a0a0}
  th.on{background:#dedede;color:#217346}
  thead th:first-child{text-align:right}thead ui-icon{display:block;width:24px;margin-left:15px}
  td{height:31px;padding:2px 3px 0;border-right:1px solid #dcdcdc;border-bottom:1px solid #dcdcdc;white-space:nowrap;position:relative}
  tr.e td,tr.e th{height:29px;padding-top:0}td.n{text-align:right}
  .sel{position:absolute;inset:-2px -2px -2px -1px;border:2px solid #217346}
  .sel::after{content:"";position:absolute;right:-3px;bottom:-3px;width:6px;height:6px;background:#217346;outline:1px solid #fff}
  .vs{width:9px;margin:2px 0 0 2px;background:#f4f4f4;border-radius:8px 0 0 8px;display:flex;flex-direction:column;overflow:hidden;padding:12px 0 12px 7px;gap:12px}
  .vs i{flex:1;margin-bottom:12px;background:#6c6c6c;border-radius:4px 0 0 4px}`, () => {
  let h = '<div class="view"><table><colgroup><col style="width:43px">' + COLS.map(c=>`<col style="width:${c[1]}px">`).join('') + '</colgroup><thead><tr><th><ui-icon name="corner"></ui-icon></th>' +
    COLS.map((c,i)=>`<th class="${i?'':'on'}">${c[0]}</th>`).join('') + '</tr></thead><tbody>';
  for (let r = 0; r < 24; r++) {
    const row = DATA[r] || COLS.map(()=>'');
    h += `<tr class="${DATA[r]?'':'e'}"><th class="${r?'':'on'}">${r+1}</th>` + row.map((v,c)=>`<td class="${typeof v==='number'?'n':''}">${v}${r+c?'':'<span class="sel"></span>'}</td>`).join('') + '</tr>';
  }
  return h + '</tbody></table></div><div class="vs"><ui-icon name="arrU"></ui-icon><i></i><ui-icon name="arrD"></ui-icon></div>';
});

define('sheet-tabs', `:host{display:flex;height:44px;flex:none;background:linear-gradient(90deg,#e3ecdb,#e8edcf 50%,#e8edcf 70%,#e3ecdb);border-top:1px solid #d3d8cb;padding:0 9px 0 32px}
  .nav{display:flex;gap:32px;margin-right:70px}
  .tab{align-self:flex-start;margin-top:-1px;height:42px;width:200px;background:#fff;border-radius:0 0 7px 7px;font-weight:600;font-size:20px}
  .tab span{border-bottom:4px solid #217346;line-height:29px}
  .v{width:1px;background:#d0d5c3;margin:9px 62px 6px 5px}
  .dots{margin-left:auto;align-self:center;margin-right:22px}
  .hs{display:flex;align-items:center;align-self:center;width:711px;height:26px;border-radius:12px;background:#f4f4f4;padding:0 7px;gap:7px}
  .hs i{flex:1;height:12px;border-radius:6px;background:#6c6c6c;margin-right:48px}`,
  `<div class="nav"><button aria-label="Previous sheet"><ui-icon name="chevLeft"></ui-icon></button><button aria-label="Next sheet"><ui-icon name="chevRight"></ui-icon></button></div>
  <button class="tab"><span>Chi Tiết Đơn Hàng</span></button><span class="v"></span><button aria-label="New sheet"><ui-icon name="plus"></ui-icon></button>
  <ui-icon class="dots" name="dots"></ui-icon><div class="hs"><ui-icon name="arrL"></ui-icon><i></i><ui-icon name="arrR"></ui-icon></div>`);

define('excel-app', `:host{display:flex;flex-direction:column;height:100vh;overflow:hidden;background:linear-gradient(90deg,#e8ebed,#e8ecef 20%,#ebecf0 50%,#ebecef)}
  header{flex:none;padding-top:6px}`,
  `<header><title-bar></title-bar><ribbon-tabs></ribbon-tabs><ribbon-bar></ribbon-bar><formula-bar></formula-bar></header><sheet-grid></sheet-grid><sheet-tabs></sheet-tabs>`);
</script>
</body>
</html>
